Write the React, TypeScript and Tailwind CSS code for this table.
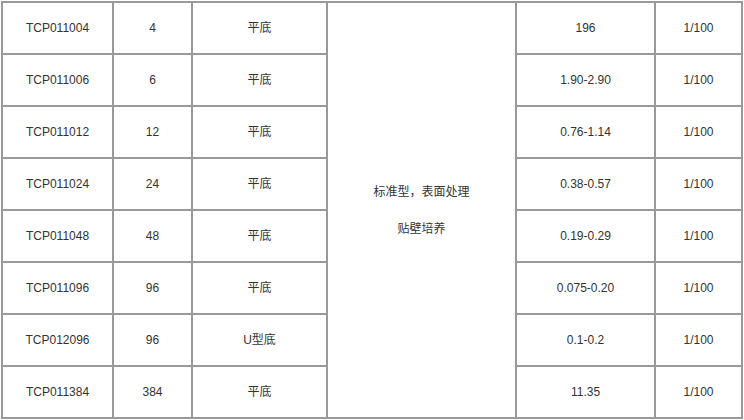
const rows = [
  { code: "TCP011004", wells: "4", bottom: "平底", area: "196", ratio: "1/100" },
  { code: "TCP011006", wells: "6", bottom: "平底", area: "1.90-2.90", ratio: "1/100" },
  { code: "TCP011012", wells: "12", bottom: "平底", area: "0.76-1.14", ratio: "1/100" },
  { code: "TCP011024", wells: "24", bottom: "平底", area: "0.38-0.57", ratio: "1/100" },
  { code: "TCP011048", wells: "48", bottom: "平底", area: "0.19-0.29", ratio: "1/100" },
  { code: "TCP011096", wells: "96", bottom: "平底", area: "0.075-0.20", ratio: "1/100" },
  { code: "TCP012096", wells: "96", bottom: "U型底", area: "0.1-0.2", ratio: "1/100" },
  { code: "TCP011384", wells: "384", bottom: "平底", area: "11.35", ratio: "1/100" },
];

const cell = "h-[52px] p-0 border-l-2 border-t-2 border-[#999] text-center align-middle";

export default function App() {
  return (
    <div className="w-[744px] h-[420px] bg-white pt-px pl-px">
      <div className="w-[742px] border-r-2 border-b-2 border-[#999]">
        <table
          className="w-[740px] table-fixed border-separate border-spacing-0 text-[12px] text-[#333]"
          style={{ fontFamily: '"Liberation Sans", Arial, "Noto Sans CJK SC", sans-serif' }}
        >
          <colgroup>
            <col className="w-[111px]" />
            <col className="w-[79px]" />
            <col className="w-[135px]" />
            <col className="w-[189px]" />
            <col className="w-[139px]" />
            <col className="w-[87px]" />
          </colgroup>
          <tbody>
            {rows.map((r, i) => (
              <tr key={r.code + i}>
                <td className={cell}>{r.code}</td>
                <td className={cell}>{r.wells}</td>
                <td className={cell}>{r.bottom}</td>
                {i === 0 && (
                  <td rowSpan={8} className="p-0 border-l-2 border-t-2 border-[#999] text-center align-middle">
                    <div className="flex flex-col items-center gap-[19px] leading-[18px]">
                      <p>标准型，表面处理</p>
                      <p>贴壁培养</p>
                    </div>
                  </td>
                )}
                <td className={cell}>{r.area}</td>
                <td className={cell}>{r.ratio}</td>
              </tr>
            ))}
          </tbody>
        </table>
      </div>
    </div>
  );
}
